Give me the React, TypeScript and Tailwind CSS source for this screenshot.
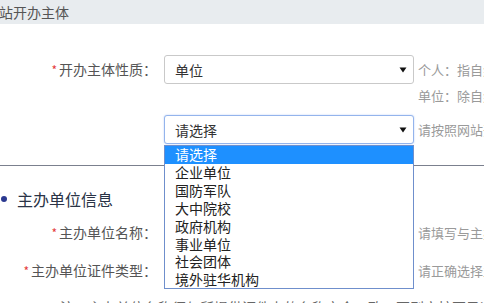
import React from "react";

const FONT = '"Noto Sans CJK SC", "Noto Sans", sans-serif';

const types = [
  "请选择",
  "企业单位",
  "国防军队",
  "大中院校",
  "政府机构",
  "事业单位",
  "社会团体",
  "境外驻华机构",
];

function Arrow() {
  return (
    <svg width="8" height="6" viewBox="0 0 8 6" className="shrink-0">
      <path d="M0.5 0.5 L7.5 0.5 L4 5.5 Z" fill="#111" />
    </svg>
  );
}

function Label({ text, required = true }: { text: string; required?: boolean }) {
  return (
    <div className="w-[157px] shrink-0 text-right text-[14px] leading-[29px] text-[#555]">
      {required && <span className="text-[#e4393c] mr-[2px] text-[12px]">*</span>}
      {text}
    </div>
  );
}

function Select({ value, focused = false }: { value: string; focused?: boolean }) {
  return (
    <div
      className={
        focused
          ? "ml-[7px] w-[250px] h-[29px] shrink-0 flex items-center justify-between pl-[10px] pr-[6px] rounded-[3px] border border-[#94b4ec] shadow-[0_0_2px_#b9cff5] bg-white text-[14px] text-[#333]"
          : "ml-[7px] w-[250px] h-[29px] shrink-0 flex items-center justify-between pl-[10px] pr-[6px] rounded-[3px] border border-[#c9c9c9] bg-white text-[14px] text-[#333]"
      }
    >
      <span className="leading-[18px]">{value}</span>
      <Arrow />
    </div>
  );
}

function Input() {
  return <div className="ml-[7px] w-[250px] h-[29px] shrink-0 rounded-[3px] border border-[#c9c9c9] bg-white" />;
}

function Help({ text }: { text: string }) {
  return <div className="ml-[4px] text-[13px] leading-[29px] text-[#9a9a9a] whitespace-nowrap">{text}</div>;
}

export default function App() {
  return (
    <div className="w-[484px] h-[303px] overflow-hidden bg-white" style={{ fontFamily: FONT }}>
      <div className="h-[24px] bg-[#e8ecef] flex items-center">
        <span className="-ml-[15px] text-[14px] leading-[24px] text-[#555]">网站开办主体</span>
      </div>

      <div className="mt-[31px] flex items-start">
        <Label text="开办主体性质：" />
        <Select value="单位" />
        <div className="ml-[4px] pt-[6px] flex flex-col gap-[8px] text-[13px] leading-[18px] text-[#9a9a9a] whitespace-nowrap">
          <span>个人：指自然人开办的网站</span>
          <span>单位：除自然人以外的其他单位</span>
        </div>
      </div>

      <div className="mt-[10px] flex items-start relative">
        <div className="w-[157px] shrink-0" />
        <Select value="请选择" focused />
        <Help text="请按照网站开办主体的实际类型选择" />
        <ul className="absolute left-[164px] top-[30px] w-[250px] h-[144px] z-10 bg-white border border-[#6f8fcc] text-[14px] leading-[17.9px] text-[#222]">
          {types.map((t, i) => (
            <li key={t} className={i === 0 ? "pl-[10px] bg-[#1e90ff] text-white" : "pl-[10px]"}>
              {t}
            </li>
          ))}
        </ul>
      </div>

      <div className="mt-[21px] h-px bg-[#7b808e]" />

      <div className="mt-[23px] flex items-center h-[20px]">
        <span className="ml-[1px] w-[6px] h-[6px] rounded-full bg-[#2b3990]" />
        <span className="ml-[10px] text-[16px] leading-[20px] text-[#2a3346]">主办单位信息</span>
      </div>

      <div className="mt-[9px] flex items-start">
        <Label text="主办单位名称：" />
        <Input />
        <Help text="请填写与主办单位证件一致的名称" />
      </div>

      <div className="mt-[9px] flex items-start">
        <Label text="主办单位证件类型：" />
        <Input />
        <Help text="请正确选择主办单位证件类型" />
      </div>

      <div className="mt-[12px] pl-[60px] text-[14px] leading-[20px] text-[#666] whitespace-nowrap">
        注：主办单位名称须与所提供证件上的名称完全一致，否则审核不予通过
      </div>
    </div>
  );
}
